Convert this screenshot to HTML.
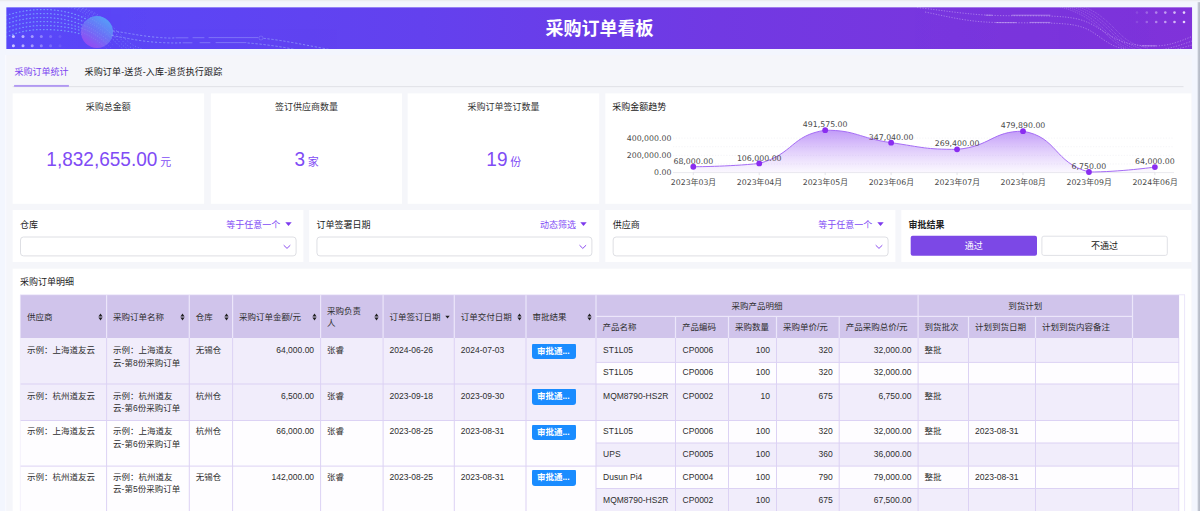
<!DOCTYPE html>
<html lang="zh-CN">
<head>
<meta charset="utf-8">
<title>采购订单看板</title>
<style>
*{box-sizing:border-box;margin:0;padding:0}
html,body{width:1200px;height:511px;overflow:hidden}
body{background:#f3f6fe;font-family:"Liberation Sans","Noto Sans CJK SC",sans-serif;font-size:9px;color:#333;position:relative}
.abs{position:absolute}
#bg{position:absolute;left:0;top:0}
h1{position:absolute;left:6.5px;top:9px;width:1186px;height:42px;line-height:41px;text-align:center;font-size:18px;font-weight:bold;color:#fff}
.tab{top:66.3px;height:12px;line-height:12px;font-size:9px;white-space:nowrap}
.t9{font-size:9px;line-height:12px;color:#222;white-space:nowrap}
.ctitle{position:absolute;text-align:center;font-size:9px;line-height:12px;color:#333;top:100.9px}
.cval{position:absolute;text-align:center;color:#7f4cf5;font-size:20px;line-height:28px;white-space:nowrap;top:145.3px;transform:scaleX(0.95)}
.cval small{font-size:11.5px;margin-left:3px}
.fop{position:absolute;top:218.6px;font-size:9px;line-height:12px;color:#7f4cf5;white-space:nowrap;text-align:right}
.c{position:absolute;overflow:hidden;font-size:8.5px;color:#2e2e2e;white-space:nowrap}
.c.h{display:flex;align-items:center;padding-left:6.5px;padding-top:1px;line-height:12.5px}
.c.h .ht{flex:1}
.c.h .si{margin-right:4px;flex:none}
.c.b{padding:0.6px 5.5px 0 6.5px;line-height:12.5px}
.c.s{padding-left:7.1px}
.c.r{text-align:right;padding-right:6.5px}
.badge{display:inline-block;background:#1a8cff;color:#fff;font-weight:bold;border-radius:3px;height:16.6px;line-height:16.4px;padding:0 5px;margin-top:-1.6px;margin-left:-0.6px;width:43.6px;overflow:hidden}
</style>
</head>
<body>
<svg id="bg" width="1200" height="511" viewBox="0 0 1200 511">
<rect x="0" y="0" width="1200" height="1.2" fill="#eaecf0"/>
<rect x="0" y="1.2" width="1200" height="1" fill="#f1f3f8"/>
<rect x="5" y="55" width="1.4" height="456" fill="#f9fafe"/>
<rect x="6.40" y="55.30" width="1185.40" height="455.70" fill="#f5f6fa" />
<defs><linearGradient id="sb" x1="0" x2="1"><stop offset="0" stop-color="#c8cdd8"/><stop offset="1" stop-color="#aeb3bf"/></linearGradient></defs>
<rect x="1197.6" y="2.2" width="3" height="509" fill="url(#sb)"/>
<defs><linearGradient id="bn" x1="0" x2="1"><stop offset="0" stop-color="#5848f9"/><stop offset="0.35" stop-color="#6341ee"/><stop offset="0.6" stop-color="#7139e3"/><stop offset="1" stop-color="#8033d9"/></linearGradient><clipPath id="bc"><rect x="6.35" y="7.35" width="1185.70" height="41.65"/></clipPath></defs>
<rect x="6.35" y="7.35" width="1185.70" height="41.65" fill="url(#bn)" />
<g clip-path="url(#bc)">
<defs>
<linearGradient id="sph" x1="0.85" y1="0.1" x2="0.25" y2="0.95"><stop offset="0" stop-color="#55a8f8"/><stop offset="0.45" stop-color="#6a78f6"/><stop offset="1" stop-color="#9a4cf2"/></linearGradient>
<linearGradient id="fadeL" x1="0" x2="1"><stop offset="0" stop-color="#9fd0ff" stop-opacity="0.85"/><stop offset="0.75" stop-color="#9fd0ff" stop-opacity="0.75"/><stop offset="1" stop-color="#9fd0ff" stop-opacity="0"/></linearGradient>
</defs>
<g fill="none" stroke="#7fb8ff" stroke-width="1.25" stroke-dasharray="0.6 2.9" stroke-linecap="round" opacity="0.72">
<path d="M6 15.5 C20 11 32 9.5 44 9.5 S72 12 84 18 S100 28 108 34"/>
<path d="M6 20 C20 15 32 13.5 44 13.5 S72 16 84 22 S100 31 108 37"/>
<path d="M6 24 C20 19 32 17.5 44 17.5 S72 20 84 26 S100 34 108 40"/>
<path d="M6 28 C20 23 32 21.5 44 21.5 S72 24 84 29 S100 37 108 43"/>
<path d="M6 32.5 C20 27 32 25.5 44 25.5 S72 27.5 82 31"/>
<path d="M6 37 C20 31 32 29.5 44 29.5 S72 31 82 34.5"/>
</g>
<g fill="none" stroke="#9ccaff" stroke-width="0.7" stroke-dasharray="1.1 2" opacity="0.5">
<path d="M68 7 C84 10 98 22 112 38 S124 48 128 50"/>
<path d="M72 7 C88 10 102 22 115 37 S128 48 133 50"/>
<path d="M76 7 C92 10 106 22 118 36 S132 47 138 50"/>
<path d="M80 7 C96 11 108 22 121 35 S136 46 144 50"/>
</g>
<circle cx="97" cy="32" r="16" fill="url(#sph)" opacity="0.92"/>
<g fill="none" stroke="#b9d4ff" stroke-width="0.6" stroke-dasharray="0.8 1.6" opacity="0.32">
<path d="M80 24 C92 27 104 36 114 46"/>
<path d="M80 28 C92 31 102 39 111 48"/>
<path d="M81 20 C94 23 106 33 117 44"/>
<path d="M83 16 C96 19 108 30 119 42"/>
<path d="M80 32 C90 35 100 42 107 49"/>
</g>
<g fill="none" stroke="#a9c8ff" stroke-width="0.9" stroke-dasharray="1.4 2.6" stroke-linecap="round" opacity="0.6">
<path d="M113 31 C128 33 142 36.2 158 37.4 S172 37.8 176 37.8"/>
<path d="M112 35.5 C128 38.5 142 41.6 160 42.5 S176 42.8 182 42.8"/>
<path d="M264 38.4 C285 40.5 310 46 335 50.5"/>
<path d="M248 43 C264 44.2 284 47 300 50.5"/>
</g>
<g stroke="#c5d6ff" stroke-width="0.9" stroke-linecap="round" opacity="0.36">
<line x1="176" x2="188" y1="37.8" y2="37.8"/><line x1="193" x2="204" y1="37.7" y2="37.7"/><line x1="209" x2="258" y1="37.6" y2="37.6"/>
<line x1="183" x2="192" y1="42.8" y2="42.8"/><line x1="200" x2="210" y1="42.7" y2="42.7"/><line x1="216" x2="246" y1="42.6" y2="42.6"/>
</g>
<circle cx="261" cy="38" r="2" fill="none" stroke="#c5d6ff" stroke-width="0.5" opacity="0.4"/>
<g fill="#d9d4ff">
<circle cx="13.4" cy="36.5" r="1.5" opacity="0.9"/><circle cx="23" cy="36.5" r="1.5" opacity="0.75"/><circle cx="32.2" cy="36.5" r="1.5" opacity="0.6"/><circle cx="41.3" cy="36.5" r="1.5" opacity="0.42"/><circle cx="50.6" cy="36.5" r="1.5" opacity="0.25"/><circle cx="60" cy="36.5" r="1.5" opacity="0.12"/>
<circle cx="13.4" cy="45.7" r="1.5" opacity="0.9"/><circle cx="23" cy="45.7" r="1.5" opacity="0.75"/><circle cx="32.2" cy="45.7" r="1.5" opacity="0.6"/><circle cx="41.3" cy="45.7" r="1.5" opacity="0.42"/><circle cx="50.6" cy="45.7" r="1.5" opacity="0.25"/><circle cx="60" cy="45.7" r="1.5" opacity="0.12"/>
</g>
<!-- right art -->
<g fill="none" stroke="#e2d4fb" stroke-width="0.7" stroke-dasharray="1.2 1.5" opacity="0.6">
<path d="M917 7.5 C940 10 960 13.5 985 15 S1045 15 1065 17 S1092 24 1106 33 S1130 45.5 1150 46 S1180 41 1192 36.5"/>
<path d="M925 12 C945 16 962 20.5 985 22 S1045 22 1066 24 S1092 32 1104 40 S1118 47 1128 50"/>
<path d="M1160 50 C1172 48 1184 44 1192 41"/>
<path d="M1172 50 C1180 48.5 1187 46.5 1192 45"/>
</g>
<g fill="none" stroke="#e6dafc" stroke-width="0.5" stroke-dasharray="0.9 1.1" opacity="0.55">
<path d="M1060 7 C1082 12 1096 24 1106 34 S1120 46 1128 50"/>
<path d="M1066 7 C1086 12 1099 24 1109 34 S1123 46 1132 50"/>
<path d="M1072 7 C1090 12 1102 23 1112 33 S1127 46 1137 50"/>
<path d="M1078 7 C1094 12 1105 23 1115 33 S1130 45 1142 49"/>
<path d="M1084 7 C1098 12 1108 22 1118 32 S1134 45 1148 48"/>
</g>
<g stroke="#eadffd" stroke-width="0.9" stroke-linecap="round" opacity="0.45">
<line x1="986" x2="992" y1="15.2" y2="15.2"/><line x1="1012" x2="1050" y1="15.2" y2="15.2"/>
<line x1="996" x2="1016" y1="22.6" y2="22.6"/><line x1="1030" x2="1050" y1="22.4" y2="22.4"/>
<line x1="1142" x2="1156" y1="45.8" y2="45.8"/>
</g>
<g fill="#efe6ff">
<circle cx="1137" cy="12.6" r="1.3" opacity="0.12"/><circle cx="1146.8" cy="12.6" r="1.3" opacity="0.28"/><circle cx="1156.2" cy="12.6" r="1.3" opacity="0.45"/><circle cx="1165.3" cy="12.6" r="1.3" opacity="0.6"/><circle cx="1174.5" cy="12.6" r="1.3" opacity="0.75"/><circle cx="1184" cy="12.6" r="1.3" opacity="0.9"/>
<circle cx="1137" cy="22" r="1.3" opacity="0.12"/><circle cx="1146.8" cy="22" r="1.3" opacity="0.28"/><circle cx="1156.2" cy="22" r="1.3" opacity="0.45"/><circle cx="1165.3" cy="22" r="1.3" opacity="0.6"/><circle cx="1174.5" cy="22" r="1.3" opacity="0.75"/><circle cx="1184" cy="22" r="1.3" opacity="0.9"/>
</g>
</g>
<rect x="12.65" y="86.05" width="1170.85" height="1.10" fill="#e2e3e8"/>
<rect x="14.10" y="84.95" width="54.80" height="1.90" fill="#b198f2"/>
<rect x="12.65" y="93.40" width="191.45" height="110.40" fill="#fff" />
<rect x="210.85" y="93.40" width="191.20" height="110.40" fill="#fff" />
<rect x="407.65" y="93.40" width="191.55" height="110.40" fill="#fff" />
<rect x="605.30" y="93.40" width="586.10" height="110.40" fill="#fff" />
<rect x="12.65" y="210.00" width="290.75" height="52.05" fill="#fff" />
<rect x="309.10" y="210.00" width="290.10" height="52.05" fill="#fff" />
<rect x="605.30" y="210.00" width="290.10" height="52.05" fill="#fff" />
<rect x="901.30" y="210.00" width="290.10" height="52.05" fill="#fff" />
<rect x="12.65" y="268.70" width="1178.75" height="242.30" fill="#fff" />
<rect x="20.50" y="237.00" width="275.60" height="18.90" rx="3" fill="#fff" stroke="#dedfe4" stroke-width="1"/>
<path d="M283.70 245.20 l3.3 3.2 l3.3 -3.2" fill="none" stroke="#8b4cf0" stroke-width="1"/>
<rect x="316.95" y="237.00" width="274.95" height="18.90" rx="3" fill="#fff" stroke="#dedfe4" stroke-width="1"/>
<path d="M579.50 245.20 l3.3 3.2 l3.3 -3.2" fill="none" stroke="#8b4cf0" stroke-width="1"/>
<rect x="613.15" y="237.00" width="274.95" height="18.90" rx="3" fill="#fff" stroke="#dedfe4" stroke-width="1"/>
<path d="M875.70 245.20 l3.3 3.2 l3.3 -3.2" fill="none" stroke="#8b4cf0" stroke-width="1"/>
<rect x="910.7" y="235.7" width="126.3" height="20.1" rx="2" fill="#7c48e6"/>
<rect x="1041.9" y="236.2" width="125.4" height="19.2" rx="2" fill="#fff" stroke="#e0e1e6" stroke-width="1"/>
<rect x="20.10" y="294.30" width="1164.90" height="1.00" fill="#ece6fa"/>
<rect x="1184.10" y="294.80" width="1.00" height="216.20" fill="#ece6fa"/>
<rect x="19.90" y="294.80" width="0.80" height="216.20" fill="#ece6fa"/>
<rect x="20.60" y="295.10" width="1158.50" height="42.90" fill="#d0c4eb" />
<rect x="20.60" y="338.00" width="575.40" height="46.00" fill="#f1edfb" />
<rect x="596.00" y="338.00" width="583.10" height="24.40" fill="#f1edfb" />
<rect x="596.00" y="362.40" width="583.10" height="21.60" fill="#fefdff" />
<rect x="20.60" y="384.00" width="575.40" height="36.50" fill="#f1edfb" />
<rect x="596.00" y="384.00" width="583.10" height="36.50" fill="#f1edfb" />
<rect x="20.60" y="420.50" width="575.40" height="45.60" fill="#fefdff" />
<rect x="596.00" y="420.50" width="583.10" height="22.50" fill="#fefdff" />
<rect x="596.00" y="443.00" width="583.10" height="23.10" fill="#f1edfb" />
<rect x="20.60" y="466.10" width="575.40" height="44.90" fill="#fefdff" />
<rect x="596.00" y="466.10" width="583.10" height="22.40" fill="#fefdff" />
<rect x="596.00" y="488.50" width="583.10" height="22.50" fill="#f1edfb" />
<rect x="596.00" y="361.90" width="583.10" height="1.00" fill="#dcd2f4"/>
<rect x="20.60" y="383.50" width="1158.50" height="1.00" fill="#dcd2f4"/>
<rect x="20.60" y="420.00" width="1158.50" height="1.00" fill="#dcd2f4"/>
<rect x="596.00" y="442.50" width="583.10" height="1.00" fill="#dcd2f4"/>
<rect x="20.60" y="465.60" width="1158.50" height="1.00" fill="#dcd2f4"/>
<rect x="596.00" y="488.00" width="583.10" height="1.00" fill="#dcd2f4"/>
<rect x="106.00" y="295.10" width="1.20" height="42.90" fill="#ece6fa"/>
<rect x="188.70" y="295.10" width="1.20" height="42.90" fill="#ece6fa"/>
<rect x="232.00" y="295.10" width="1.20" height="42.90" fill="#ece6fa"/>
<rect x="320.00" y="295.10" width="1.20" height="42.90" fill="#ece6fa"/>
<rect x="382.50" y="295.10" width="1.20" height="42.90" fill="#ece6fa"/>
<rect x="453.70" y="295.10" width="1.20" height="42.90" fill="#ece6fa"/>
<rect x="525.40" y="295.10" width="1.20" height="42.90" fill="#ece6fa"/>
<rect x="595.40" y="295.10" width="1.20" height="42.90" fill="#ece6fa"/>
<rect x="674.90" y="316.40" width="1.20" height="21.60" fill="#ece6fa"/>
<rect x="727.90" y="316.40" width="1.20" height="21.60" fill="#ece6fa"/>
<rect x="775.90" y="316.40" width="1.20" height="21.60" fill="#ece6fa"/>
<rect x="838.60" y="316.40" width="1.20" height="21.60" fill="#ece6fa"/>
<rect x="917.50" y="295.10" width="1.20" height="42.90" fill="#ece6fa"/>
<rect x="967.90" y="316.40" width="1.20" height="21.60" fill="#ece6fa"/>
<rect x="1034.90" y="316.40" width="1.20" height="21.60" fill="#ece6fa"/>
<rect x="1131.90" y="295.10" width="1.20" height="42.90" fill="#ece6fa"/>
<rect x="596.00" y="315.80" width="536.50" height="1.20" fill="#ece6fa"/>
<rect x="106.10" y="338.00" width="1.00" height="173.00" fill="#dcd2f4"/>
<rect x="188.80" y="338.00" width="1.00" height="173.00" fill="#dcd2f4"/>
<rect x="232.10" y="338.00" width="1.00" height="173.00" fill="#dcd2f4"/>
<rect x="320.10" y="338.00" width="1.00" height="173.00" fill="#dcd2f4"/>
<rect x="382.60" y="338.00" width="1.00" height="173.00" fill="#dcd2f4"/>
<rect x="453.80" y="338.00" width="1.00" height="173.00" fill="#dcd2f4"/>
<rect x="525.50" y="338.00" width="1.00" height="173.00" fill="#dcd2f4"/>
<rect x="595.50" y="338.00" width="1.00" height="173.00" fill="#dcd2f4"/>
<rect x="675.00" y="338.00" width="1.00" height="173.00" fill="#dcd2f4"/>
<rect x="728.00" y="338.00" width="1.00" height="173.00" fill="#dcd2f4"/>
<rect x="776.00" y="338.00" width="1.00" height="173.00" fill="#dcd2f4"/>
<rect x="838.70" y="338.00" width="1.00" height="173.00" fill="#dcd2f4"/>
<rect x="917.60" y="338.00" width="1.00" height="173.00" fill="#dcd2f4"/>
<rect x="968.00" y="338.00" width="1.00" height="173.00" fill="#dcd2f4"/>
<rect x="1035.00" y="338.00" width="1.00" height="173.00" fill="#dcd2f4"/>
<rect x="1132.00" y="338.00" width="1.00" height="173.00" fill="#dcd2f4"/>
<rect x="1178.40" y="338.00" width="0.80" height="173.00" fill="#dcd2f4"/>
</svg>
<h1>采购订单看板</h1>
<div class="abs tab" style="left:14.5px;color:#7b45f0">采购订单统计</div>
<div class="abs tab" style="left:84.5px;color:#222;letter-spacing:0.17px">采购订单-送货-入库-退货执行跟踪</div>
<div class="ctitle" style="left:12.65px;width:191.45px">采购总金额</div>
<div class="cval" style="left:12.65px;width:191.45px">1,832,655.00<small>元</small></div>
<div class="ctitle" style="left:210.85px;width:191.20px">签订供应商数量</div>
<div class="cval" style="left:210.85px;width:191.20px">3<small>家</small></div>
<div class="ctitle" style="left:407.65px;width:191.55px">采购订单签订数量</div>
<div class="cval" style="left:407.65px;width:191.55px">19<small>份</small></div>
<div class="abs t9" style="left:612.3px;top:101.2px">采购金额趋势</div>
<svg class="abs" style="left:0;top:0;pointer-events:none" width="1200" height="511" viewBox="0 0 1200 511" font-family="'DejaVu Sans','Noto Sans CJK SC',sans-serif" font-size="7.8">
<defs><linearGradient id="ag" x1="0" y1="0" x2="0" y2="1"><stop offset="0" stop-color="#9b5cf3" stop-opacity="0.62"/><stop offset="1" stop-color="#b88bf7" stop-opacity="0.06"/></linearGradient></defs>
<line x1="673" x2="1174" y1="163.97" y2="163.97" stroke="#ececf2" stroke-width="0.6" stroke-dasharray="1.2 1.6"/>
<line x1="673" x2="1174" y1="155.35" y2="155.35" stroke="#ececf2" stroke-width="0.6" stroke-dasharray="1.2 1.6"/>
<line x1="673" x2="1174" y1="146.72" y2="146.72" stroke="#ececf2" stroke-width="0.6" stroke-dasharray="1.2 1.6"/>
<line x1="673" x2="1174" y1="138.10" y2="138.10" stroke="#ececf2" stroke-width="0.6" stroke-dasharray="1.2 1.6"/>
<line x1="673" x2="1174" y1="172.60" y2="172.60" stroke="#e3e3ea" stroke-width="0.8"/>
<line x1="693.30" x2="693.30" y1="172.60" y2="175.10" stroke="#d8d8e0" stroke-width="0.7"/>
<line x1="759.24" x2="759.24" y1="172.60" y2="175.10" stroke="#d8d8e0" stroke-width="0.7"/>
<line x1="825.18" x2="825.18" y1="172.60" y2="175.10" stroke="#d8d8e0" stroke-width="0.7"/>
<line x1="891.12" x2="891.12" y1="172.60" y2="175.10" stroke="#d8d8e0" stroke-width="0.7"/>
<line x1="957.06" x2="957.06" y1="172.60" y2="175.10" stroke="#d8d8e0" stroke-width="0.7"/>
<line x1="1023.00" x2="1023.00" y1="172.60" y2="175.10" stroke="#d8d8e0" stroke-width="0.7"/>
<line x1="1088.94" x2="1088.94" y1="172.60" y2="175.10" stroke="#d8d8e0" stroke-width="0.7"/>
<line x1="1154.88" x2="1154.88" y1="172.60" y2="175.10" stroke="#d8d8e0" stroke-width="0.7"/>
<path d="M693.30 166.73 C693.30 166.73 728.12 166.73 759.24 163.46 C794.06 153.81 790.63 135.65 825.18 130.20 C856.57 130.20 857.95 137.85 891.12 142.67 C923.89 147.43 924.61 149.36 957.06 149.36 C990.55 146.45 992.10 131.21 1023.00 131.21 C1058.04 137.23 1053.35 162.34 1088.94 172.02 C1119.29 172.02 1154.88 167.08 1154.88 167.08 L1154.88 172.60 L693.30 172.60 Z" fill="url(#ag)"/>
<path d="M693.30 166.73 C693.30 166.73 728.12 166.73 759.24 163.46 C794.06 153.81 790.63 135.65 825.18 130.20 C856.57 130.20 857.95 137.85 891.12 142.67 C923.89 147.43 924.61 149.36 957.06 149.36 C990.55 146.45 992.10 131.21 1023.00 131.21 C1058.04 137.23 1053.35 162.34 1088.94 172.02 C1119.29 172.02 1154.88 167.08 1154.88 167.08" fill="none" stroke="#a56cf5" stroke-width="1"/>
<circle cx="693.30" cy="166.73" r="2.9" fill="#8a2df0"/>
<circle cx="759.24" cy="163.46" r="2.9" fill="#8a2df0"/>
<circle cx="825.18" cy="130.20" r="2.9" fill="#8a2df0"/>
<circle cx="891.12" cy="142.67" r="2.9" fill="#8a2df0"/>
<circle cx="957.06" cy="149.36" r="2.9" fill="#8a2df0"/>
<circle cx="1023.00" cy="131.21" r="2.9" fill="#8a2df0"/>
<circle cx="1088.94" cy="172.02" r="2.9" fill="#8a2df0"/>
<circle cx="1154.88" cy="167.08" r="2.9" fill="#8a2df0"/>
<text x="693.30" y="163.83" text-anchor="middle" fill="#4a4a4a">68,000.00</text>
<text x="759.24" y="160.56" text-anchor="middle" fill="#4a4a4a">106,000.00</text>
<text x="825.18" y="127.30" text-anchor="middle" fill="#4a4a4a">491,575.00</text>
<text x="891.12" y="139.77" text-anchor="middle" fill="#4a4a4a">347,040.00</text>
<text x="957.06" y="146.46" text-anchor="middle" fill="#4a4a4a">269,400.00</text>
<text x="1023.00" y="128.31" text-anchor="middle" fill="#4a4a4a">479,890.00</text>
<text x="1088.94" y="169.12" text-anchor="middle" fill="#4a4a4a">6,750.00</text>
<text x="1154.88" y="164.18" text-anchor="middle" fill="#4a4a4a">64,000.00</text>
<text x="693.50" y="185.10" text-anchor="middle" fill="#4a4a4a">2023年03月</text>
<text x="759.44" y="185.10" text-anchor="middle" fill="#4a4a4a">2023年04月</text>
<text x="825.38" y="185.10" text-anchor="middle" fill="#4a4a4a">2023年05月</text>
<text x="891.32" y="185.10" text-anchor="middle" fill="#4a4a4a">2023年06月</text>
<text x="957.26" y="185.10" text-anchor="middle" fill="#4a4a4a">2023年07月</text>
<text x="1023.20" y="185.10" text-anchor="middle" fill="#4a4a4a">2023年08月</text>
<text x="1089.14" y="185.10" text-anchor="middle" fill="#4a4a4a">2023年09月</text>
<text x="1155.08" y="185.10" text-anchor="middle" fill="#4a4a4a">2024年06月</text>
<text x="671.4" y="141.00" text-anchor="end" fill="#4a4a4a">400,000.00</text>
<text x="671.4" y="158.25" text-anchor="end" fill="#4a4a4a">200,000.00</text>
<text x="671.4" y="174.80" text-anchor="end" fill="#4a4a4a">0.00</text>
</svg>
<div class="abs t9" style="left:20.00px;top:218.6px">仓库</div>
<div class="fop" style="left:12.65px;width:279.05px">等于任意一个 <svg width="7" height="4" viewBox="0 0 7 4" style="margin-left:2px;vertical-align:1.5px"><path d="M0.3 0.2 H6.7 L3.5 3.9Z" fill="#7c3aed"/></svg></div>
<div class="abs t9" style="left:316.45px;top:218.6px">订单签署日期</div>
<div class="fop" style="left:309.10px;width:278.40px">动态筛选 <svg width="7" height="4" viewBox="0 0 7 4" style="margin-left:2px;vertical-align:1.5px"><path d="M0.3 0.2 H6.7 L3.5 3.9Z" fill="#7c3aed"/></svg></div>
<div class="abs t9" style="left:612.65px;top:218.6px">供应商</div>
<div class="fop" style="left:605.30px;width:278.40px">等于任意一个 <svg width="7" height="4" viewBox="0 0 7 4" style="margin-left:2px;vertical-align:1.5px"><path d="M0.3 0.2 H6.7 L3.5 3.9Z" fill="#7c3aed"/></svg></div>
<div class="abs t9" style="left:908.6px;top:218.6px;font-weight:bold">审批结果</div>
<div class="abs t9" style="left:910.7px;top:239.7px;width:126.3px;text-align:center;color:#fff">通过</div>
<div class="abs t9" style="left:1041.9px;top:239.7px;width:125.4px;text-align:center">不通过</div>
<div class="abs t9" style="left:20px;top:275.7px">采购订单明细</div>
<div class="c h" style="left:20.60px;top:295.10px;width:86.00px;height:42.90px;"><span class="ht">供应商</span><svg class="si" width="5" height="8" viewBox="0 0 5 8"><path d="M2.5 0.6 L4.6 3.4 H0.4Z M2.5 7.4 L4.6 4.6 H0.4Z" fill="#222"/></svg></div>
<div class="c h" style="left:106.60px;top:295.10px;width:82.70px;height:42.90px;"><span class="ht">采购订单名称</span><svg class="si" width="5" height="8" viewBox="0 0 5 8"><path d="M2.5 0.6 L4.6 3.4 H0.4Z M2.5 7.4 L4.6 4.6 H0.4Z" fill="#222"/></svg></div>
<div class="c h" style="left:189.30px;top:295.10px;width:43.30px;height:42.90px;"><span class="ht">仓库</span><svg class="si" width="5" height="8" viewBox="0 0 5 8"><path d="M2.5 0.6 L4.6 3.4 H0.4Z M2.5 7.4 L4.6 4.6 H0.4Z" fill="#222"/></svg></div>
<div class="c h" style="left:232.60px;top:295.10px;width:88.00px;height:42.90px;"><span class="ht">采购订单金额/元</span><svg class="si" width="5" height="8" viewBox="0 0 5 8"><path d="M2.5 0.6 L4.6 3.4 H0.4Z M2.5 7.4 L4.6 4.6 H0.4Z" fill="#222"/></svg></div>
<div class="c h" style="left:320.60px;top:295.10px;width:62.50px;height:42.90px;"><span class="ht">采购负责<br>人</span><svg class="si" width="5" height="8" viewBox="0 0 5 8"><path d="M2.5 0.6 L4.6 3.4 H0.4Z M2.5 7.4 L4.6 4.6 H0.4Z" fill="#222"/></svg></div>
<div class="c h" style="left:383.10px;top:295.10px;width:71.20px;height:42.90px;"><span class="ht">订单签订日期</span><svg class="si" width="5" height="8" viewBox="0 0 5 8"><path d="M0.3 2.8 H4.7 L2.5 5.6Z" fill="#222"/></svg></div>
<div class="c h" style="left:454.30px;top:295.10px;width:71.70px;height:42.90px;"><span class="ht">订单交付日期</span><svg class="si" width="5" height="8" viewBox="0 0 5 8"><path d="M2.5 0.6 L4.6 3.4 H0.4Z M2.5 7.4 L4.6 4.6 H0.4Z" fill="#222"/></svg></div>
<div class="c h" style="left:526.00px;top:295.10px;width:70.00px;height:42.90px;"><span class="ht">审批结果</span><svg class="si" width="5" height="8" viewBox="0 0 5 8"><path d="M2.5 0.6 L4.6 3.4 H0.4Z M2.5 7.4 L4.6 4.6 H0.4Z" fill="#222"/></svg></div>
<div class="c g" style="left:596.00px;top:295.10px;width:322.10px;height:21.30px;text-align:center;line-height:22.9px">采购产品明细</div>
<div class="c g" style="left:918.10px;top:295.10px;width:214.40px;height:21.30px;text-align:center;line-height:22.9px">到货计划</div>
<div class="c g" style="left:596.00px;top:316.40px;width:79.50px;height:21.60px;line-height:23.1px;padding-left:6.5px">产品名称</div>
<div class="c g" style="left:675.50px;top:316.40px;width:53.00px;height:21.60px;line-height:23.1px;padding-left:6.5px">产品编码</div>
<div class="c g" style="left:728.50px;top:316.40px;width:48.00px;height:21.60px;line-height:23.1px;padding-left:6.5px">采购数量</div>
<div class="c g" style="left:776.50px;top:316.40px;width:62.70px;height:21.60px;line-height:23.1px;padding-left:6.5px">采购单价/元</div>
<div class="c g" style="left:839.20px;top:316.40px;width:78.90px;height:21.60px;line-height:23.1px;padding-left:6.5px">产品采购总价/元</div>
<div class="c g" style="left:918.10px;top:316.40px;width:50.40px;height:21.60px;line-height:23.1px;padding-left:6.5px">到货批次</div>
<div class="c g" style="left:968.50px;top:316.40px;width:67.00px;height:21.60px;line-height:23.1px;padding-left:6.5px">计划到货日期</div>
<div class="c g" style="left:1035.50px;top:316.40px;width:97.00px;height:21.60px;line-height:23.1px;padding-left:6.5px">计划到货内容备注</div>
<div class="c b" style="left:20.60px;top:343.65px;width:86.00px;height:40.35px">示例：上海道友云</div>
<div class="c b" style="left:106.60px;top:343.65px;width:82.70px;height:40.35px">示例：上海道友<br>云-第8份采购订单</div>
<div class="c b" style="left:189.30px;top:343.65px;width:43.30px;height:40.35px">无锡仓</div>
<div class="c b r" style="left:232.60px;top:343.65px;width:88.00px;height:40.35px">64,000.00</div>
<div class="c b" style="left:320.60px;top:343.65px;width:62.50px;height:40.35px">张睿</div>
<div class="c b" style="left:383.10px;top:343.65px;width:71.20px;height:40.35px">2024-06-26</div>
<div class="c b" style="left:454.30px;top:343.65px;width:71.70px;height:40.35px">2024-07-03</div>
<div class="c b" style="left:526.00px;top:343.65px;width:70.00px;height:40.35px"><span class="badge">审批通...</span></div>
<div class="c b s" style="left:596.00px;top:343.35px;width:79.50px;height:19.05px">ST1L05</div>
<div class="c b s" style="left:675.50px;top:343.35px;width:53.00px;height:19.05px">CP0006</div>
<div class="c b r" style="left:728.50px;top:343.35px;width:48.00px;height:19.05px">100</div>
<div class="c b r" style="left:776.50px;top:343.35px;width:62.70px;height:19.05px">320</div>
<div class="c b r" style="left:839.20px;top:343.35px;width:78.90px;height:19.05px">32,000.00</div>
<div class="c b" style="left:918.10px;top:343.35px;width:50.40px;height:19.05px">整批</div>
<div class="c b s" style="left:596.00px;top:365.85px;width:79.50px;height:18.15px">ST1L05</div>
<div class="c b s" style="left:675.50px;top:365.85px;width:53.00px;height:18.15px">CP0006</div>
<div class="c b r" style="left:728.50px;top:365.85px;width:48.00px;height:18.15px">100</div>
<div class="c b r" style="left:776.50px;top:365.85px;width:62.70px;height:18.15px">320</div>
<div class="c b r" style="left:839.20px;top:365.85px;width:78.90px;height:18.15px">32,000.00</div>
<div class="c b" style="left:20.60px;top:389.15px;width:86.00px;height:31.35px">示例：杭州道友云</div>
<div class="c b" style="left:106.60px;top:389.15px;width:82.70px;height:31.35px">示例：杭州道友<br>云-第6份采购订单</div>
<div class="c b" style="left:189.30px;top:389.15px;width:43.30px;height:31.35px">杭州仓</div>
<div class="c b r" style="left:232.60px;top:389.15px;width:88.00px;height:31.35px">6,500.00</div>
<div class="c b" style="left:320.60px;top:389.15px;width:62.50px;height:31.35px">张睿</div>
<div class="c b" style="left:383.10px;top:389.15px;width:71.20px;height:31.35px">2023-09-18</div>
<div class="c b" style="left:454.30px;top:389.15px;width:71.70px;height:31.35px">2023-09-30</div>
<div class="c b" style="left:526.00px;top:389.15px;width:70.00px;height:31.35px"><span class="badge">审批通...</span></div>
<div class="c b s" style="left:596.00px;top:389.15px;width:79.50px;height:31.35px">MQM8790-HS2R</div>
<div class="c b s" style="left:675.50px;top:389.15px;width:53.00px;height:31.35px">CP0002</div>
<div class="c b r" style="left:728.50px;top:389.15px;width:48.00px;height:31.35px">10</div>
<div class="c b r" style="left:776.50px;top:389.15px;width:62.70px;height:31.35px">675</div>
<div class="c b r" style="left:839.20px;top:389.15px;width:78.90px;height:31.35px">6,750.00</div>
<div class="c b" style="left:918.10px;top:389.15px;width:50.40px;height:31.35px">整批</div>
<div class="c b" style="left:20.60px;top:424.85px;width:86.00px;height:41.25px">示例：上海道友云</div>
<div class="c b" style="left:106.60px;top:424.85px;width:82.70px;height:41.25px">示例：上海道友<br>云-第6份采购订单</div>
<div class="c b" style="left:189.30px;top:424.85px;width:43.30px;height:41.25px">杭州仓</div>
<div class="c b r" style="left:232.60px;top:424.85px;width:88.00px;height:41.25px">66,000.00</div>
<div class="c b" style="left:320.60px;top:424.85px;width:62.50px;height:41.25px">张睿</div>
<div class="c b" style="left:383.10px;top:424.85px;width:71.20px;height:41.25px">2023-08-25</div>
<div class="c b" style="left:454.30px;top:424.85px;width:71.70px;height:41.25px">2023-08-31</div>
<div class="c b" style="left:526.00px;top:424.85px;width:70.00px;height:41.25px"><span class="badge">审批通...</span></div>
<div class="c b s" style="left:596.00px;top:424.75px;width:79.50px;height:18.25px">ST1L05</div>
<div class="c b s" style="left:675.50px;top:424.75px;width:53.00px;height:18.25px">CP0006</div>
<div class="c b r" style="left:728.50px;top:424.75px;width:48.00px;height:18.25px">100</div>
<div class="c b r" style="left:776.50px;top:424.75px;width:62.70px;height:18.25px">320</div>
<div class="c b r" style="left:839.20px;top:424.75px;width:78.90px;height:18.25px">32,000.00</div>
<div class="c b" style="left:918.10px;top:424.75px;width:50.40px;height:18.25px">整批</div>
<div class="c b" style="left:968.50px;top:424.75px;width:67.00px;height:18.25px">2023-08-31</div>
<div class="c b s" style="left:596.00px;top:447.55px;width:79.50px;height:18.55px">UPS</div>
<div class="c b s" style="left:675.50px;top:447.55px;width:53.00px;height:18.55px">CP0005</div>
<div class="c b r" style="left:728.50px;top:447.55px;width:48.00px;height:18.55px">100</div>
<div class="c b r" style="left:776.50px;top:447.55px;width:62.70px;height:18.55px">360</div>
<div class="c b r" style="left:839.20px;top:447.55px;width:78.90px;height:18.55px">36,000.00</div>
<div class="c b" style="left:20.60px;top:469.95px;width:86.00px;height:42.05px">示例：杭州道友云</div>
<div class="c b" style="left:106.60px;top:469.95px;width:82.70px;height:42.05px">示例：杭州道友<br>云-第5份采购订单</div>
<div class="c b" style="left:189.30px;top:469.95px;width:43.30px;height:42.05px">无锡仓</div>
<div class="c b r" style="left:232.60px;top:469.95px;width:88.00px;height:42.05px">142,000.00</div>
<div class="c b" style="left:320.60px;top:469.95px;width:62.50px;height:42.05px">张睿</div>
<div class="c b" style="left:383.10px;top:469.95px;width:71.20px;height:42.05px">2023-08-25</div>
<div class="c b" style="left:454.30px;top:469.95px;width:71.70px;height:42.05px">2023-08-31</div>
<div class="c b" style="left:526.00px;top:469.95px;width:70.00px;height:42.05px"><span class="badge">审批通...</span></div>
<div class="c b s" style="left:596.00px;top:470.05px;width:79.50px;height:18.45px">Dusun Pi4</div>
<div class="c b s" style="left:675.50px;top:470.05px;width:53.00px;height:18.45px">CP0004</div>
<div class="c b r" style="left:728.50px;top:470.05px;width:48.00px;height:18.45px">100</div>
<div class="c b r" style="left:776.50px;top:470.05px;width:62.70px;height:18.45px">790</div>
<div class="c b r" style="left:839.20px;top:470.05px;width:78.90px;height:18.45px">79,000.00</div>
<div class="c b" style="left:918.10px;top:470.05px;width:50.40px;height:18.45px">整批</div>
<div class="c b" style="left:968.50px;top:470.05px;width:67.00px;height:18.45px">2023-08-31</div>
<div class="c b s" style="left:596.00px;top:493.45px;width:79.50px;height:18.55px">MQM8790-HS2R</div>
<div class="c b s" style="left:675.50px;top:493.45px;width:53.00px;height:18.55px">CP0002</div>
<div class="c b r" style="left:728.50px;top:493.45px;width:48.00px;height:18.55px">100</div>
<div class="c b r" style="left:776.50px;top:493.45px;width:62.70px;height:18.55px">675</div>
<div class="c b r" style="left:839.20px;top:493.45px;width:78.90px;height:18.55px">67,500.00</div>
</body>
</html>
